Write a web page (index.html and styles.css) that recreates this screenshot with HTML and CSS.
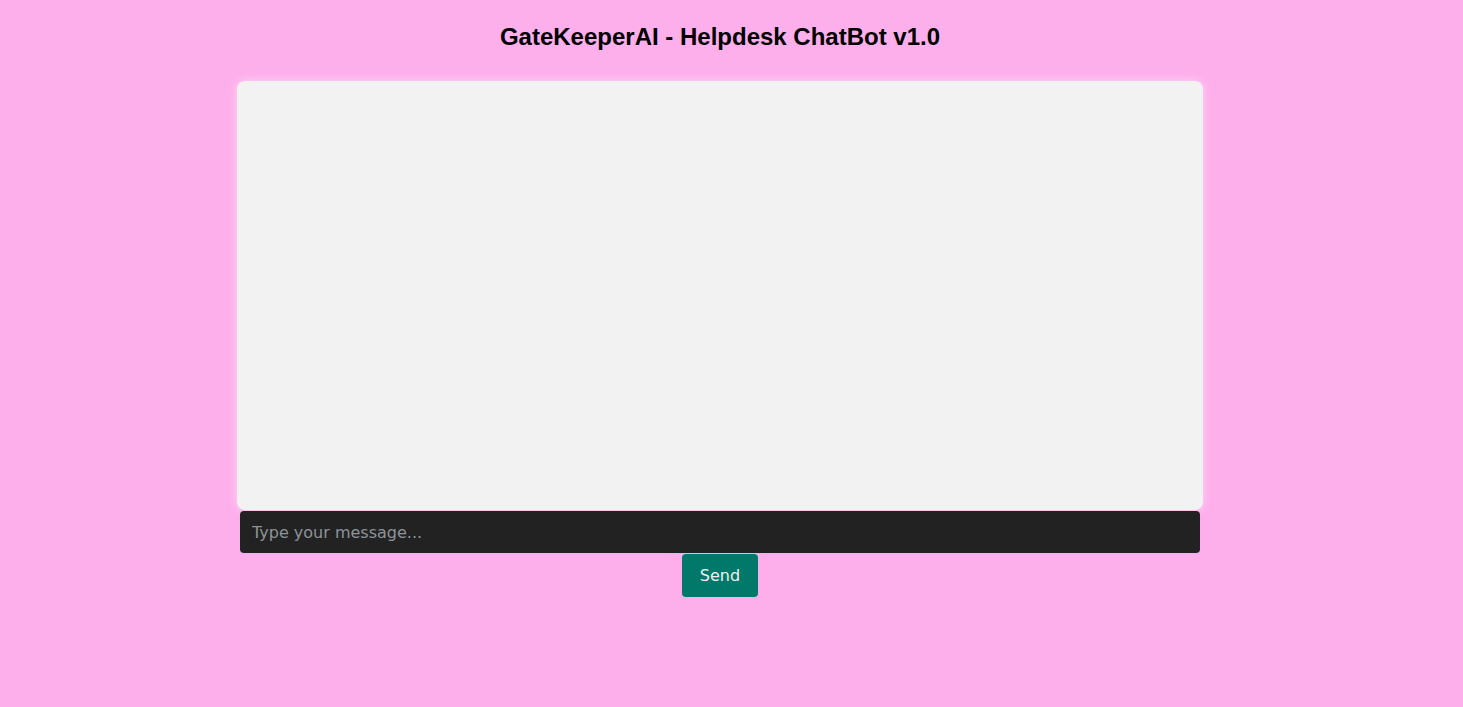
FILE: index.html
```html
<!DOCTYPE html>
<html>
<head>
<meta charset="utf-8">
<link rel="stylesheet" href="styles.css">
</head>
<body>
<div class="page">
  <h1 class="title">GateKeeperAI - Helpdesk ChatBot v1.0</h1>
  <div class="chat"></div>
  <input class="msg" type="text" placeholder="Type your message...">
  <button class="send">Send</button>
</div>
</body>
</html>
```
FILE: styles.css
```css
html, body {
  margin: 0;
  padding: 0;
  background: #fdafeb;
}
.page {
  width: 1440px;
  display: flex;
  flex-direction: column;
  align-items: center;
}
.title {
  font-family: "Liberation Sans", Arial, sans-serif;
  font-weight: bold;
  font-size: 24px;
  line-height: 28px;
  color: #000;
  margin: 23px 0 30px 0;
}
.chat {
  width: 966px;
  height: 429px;
  background: #f2f2f2;
  border-radius: 8px;
  box-shadow: 0 0 8px rgba(255, 255, 255, 0.5);
}
.msg {
  box-sizing: border-box;
  width: 960px;
  height: 42px;
  margin-top: 1px;
  border: none;
  outline: none;
  border-radius: 4px;
  background: #222;
  color: #eee;
  padding: 0 12px;
  font-family: "DejaVu Sans", sans-serif;
  font-size: 16px;
}
.msg::placeholder {
  color: #8d9499;
}
.send {
  width: 76px;
  height: 43px;
  margin-top: 1px;
  border: none;
  border-radius: 4px;
  background: #00796b;
  color: #f0f0f0;
  font-family: "DejaVu Sans", sans-serif;
  font-size: 16px;
  padding: 0;
}
```
